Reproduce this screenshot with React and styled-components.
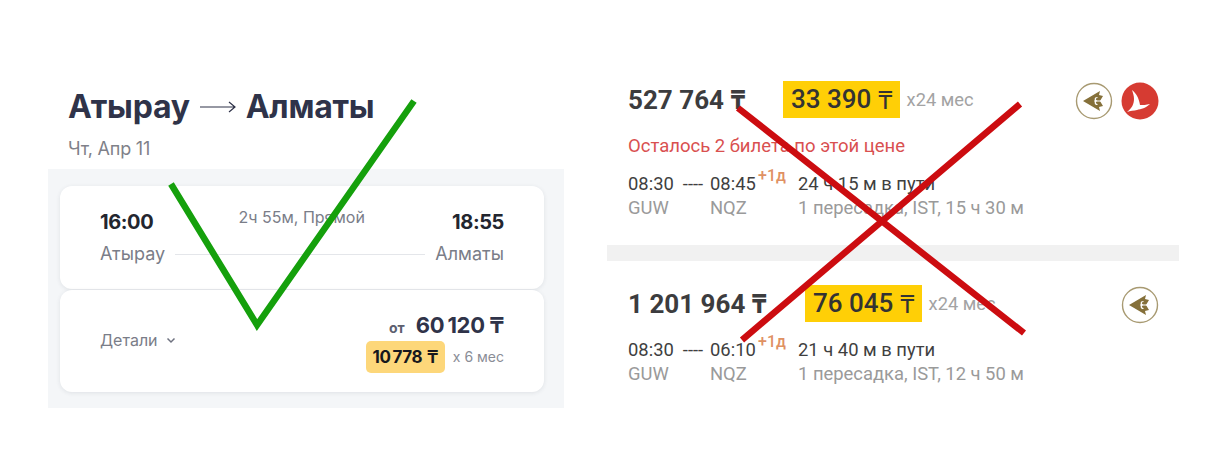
import React from 'react';
import styled, { createGlobalStyle } from 'styled-components';

const GlobalStyle = createGlobalStyle`
    html, body {
        margin: 0;
        padding: 0;
        background: #fff;
    }
`;

const Page = styled.div`
    position: relative;
    display: flex;
    width: 1214px;
    height: 454px;
    overflow: hidden;
    background: #fff;
`;

const LeftPanel = styled.section`
    width: 516px;
    margin-left: 48px;
    font-family: Inter, "Noto Sans", sans-serif;
`;

const RouteHeader = styled.header`
    height: 169px;
    padding: 88px 0 0 20px;
    box-sizing: border-box;
`;

const RouteTitle = styled.h1`
    display: flex;
    align-items: center;
    gap: 10px;
    margin: 0;
    height: 37px;
    font-size: 32px;
    line-height: 37px;
    font-weight: 700;
    letter-spacing: -0.25px;
    color: #2f3349;
`;

const RouteDate = styled.div`
    margin-top: 13px;
    font-size: 18px;
    line-height: 22px;
    color: #7f8189;
    letter-spacing: -0.2px;
`;

const Cards = styled.div`
    display: flex;
    flex-direction: column;
    gap: 1px;
    height: 239px;
    padding: 17px 20px 0 12px;
    box-sizing: border-box;
    background: #f4f6f8;
`;

const Card = styled.div`
    height: ${p => p.$height}px;
    padding: ${p => p.$padding};
    box-sizing: border-box;
    border-radius: 12px;
    background: #fff;
    box-shadow: 0 1px 4px rgba(40, 50, 70, 0.1);
`;

const TimeRow = styled.div`
    display: flex;
    justify-content: space-between;
    align-items: flex-start;
    height: 32px;
`;

const TimeText = styled.div`
    font-size: 20px;
    line-height: 24px;
    font-weight: 700;
    letter-spacing: -0.4px;
    color: #23262f;
`;

const Duration = styled.div`
    font-size: 16px;
    line-height: 18px;
    color: #7a7d88;
    margin: -2px 0 0 -2px;
`;

const CityRow = styled.div`
    display: flex;
    align-items: center;
    gap: 10px;
    font-size: 18px;
    line-height: 24px;
    color: #7a7d88;
`;

const CityLine = styled.div`
    flex: 1;
    height: 1px;
    background: #e4e6ea;
`;

const PriceCard = styled.div`
    display: flex;
    justify-content: space-between;
    align-items: center;
    height: 100%;
`;

const Details = styled.div`
    display: flex;
    align-items: center;
    gap: 8px;
    font-size: 16px;
    color: #7a7d88;
    margin-top: -2px;
`;

const PriceColumn = styled.div`
    display: flex;
    flex-direction: column;
    align-items: flex-end;
    gap: 2px;
    margin-top: 1px;
`;

const PriceLine = styled.div`
    display: flex;
    align-items: baseline;
    gap: 11px;
    font-weight: 700;
    color: #2f3349;
`;

const FromLabel = styled.span`
    font-size: 14px;
    color: #5d6070;
`;

const MainPrice = styled.span`
    font-size: 22px;
    line-height: 28px;
    letter-spacing: -0.3px;
`;

const InstallmentLine = styled.div`
    display: flex;
    align-items: center;
    gap: 8px;
    font-size: 14px;
    color: #8a8d96;
`;

const InstallmentBadge = styled.span`
    display: inline-flex;
    align-items: center;
    gap: 5px;
    height: 32px;
    padding: 0 7px;
    border-radius: 5px;
    background: #fdd77a;
    font-size: 17px;
    font-weight: 700;
    letter-spacing: -0.5px;
    color: #17181d;
`;

const Tenge = styled.span`
    font-weight: ${p => p.$weight || 700};
`;

const RightPanel = styled.section`
    width: 572px;
    margin-left: 43px;
    font-family: Roboto, "Noto Sans", sans-serif;
`;

const Offer = styled.div`
    height: ${p => p.$height}px;
    padding: ${p => p.$top}px 20px 0 21px;
    box-sizing: border-box;
`;

const OfferTop = styled.div`
    display: flex;
    align-items: center;
    height: 38px;
`;

const OfferPrice = styled.div`
    font-size: 26px;
    font-weight: 700;
    color: #3c3c3e;
    min-width: ${p => p.$width}px;
`;

const PromoPrice = styled.div`
    display: flex;
    align-items: center;
    gap: 7px;
    height: 37px;
    padding: 0 7px 0 8px;
    background: #ffcf06;
    font-size: 26px;
    font-weight: 500;
    color: #333;
`;

const Months = styled.span`
    margin-left: 7px;
    font-size: 18.3px;
    color: #a3a3a3;
`;

const Logos = styled.div`
    display: flex;
    gap: 8px;
    margin: 4px 0 0 auto;
`;

const Warning = styled.div`
    margin-top: 17px;
    font-size: 18.5px;
    line-height: 22px;
    color: #d95050;
`;

const Itinerary = styled.div`
    display: grid;
    grid-template-columns: 82px 88px auto;
    margin-top: ${p => p.$top}px;
    font-size: 18.4px;
    line-height: 24px;
    color: #3f3f3f;
`;

const Muted = styled.div`
    color: #9a9a9a;
`;

const DepartTime = styled.div`
    display: flex;
    gap: 9px;
    white-space: nowrap;
`;

const Arrival = styled.div`
    position: relative;
`;

const NextDay = styled.sup`
    position: absolute;
    left: 48px;
    top: -5px;
    font-size: 16px;
    line-height: 18px;
    font-weight: 500;
    color: #df9163;
`;

const Separator = styled.div`
    height: 16px;
    background: #f1f1f1;
`;

const Overlay = styled.svg`
    position: absolute;
    inset: 0;
    pointer-events: none;
`;

function EmblemLogo() {
    return (
        <svg width="38" height="38" viewBox="0 0 38 38">
            <circle cx="19" cy="19" r="17.5" fill="#fff" stroke="#a89a72" strokeWidth="1.4" />
            <path d="M8 19 L25 9 L24 13 L28 14 L25 19 L28 24 L24 25 L25 29 Z" fill="#85703a" />
            <path d="M19 19h7M22.5 15.5c-3 0-3 3.5 0 3.5M22.5 22.5c-3 0-3-3.5 0-3.5" fill="none" stroke="#fff" strokeWidth="1.2" />
        </svg>
    );
}

function TurkishLogo() {
    return (
        <svg width="38" height="38" viewBox="0 0 38 38">
            <circle cx="19" cy="19" r="18.5" fill="#d63b32" />
            <path d="M11 8 C15 11 18 16 19 23 C22 23 25 23 29 22 C25 26 20 27 16 28 C13 28.5 9 29 6 30 C11 26 13 22 13 17 C13 14 12 11 11 8 Z" fill="#fff" />
        </svg>
    );
}

function Chevron() {
    return (
        <svg width="10" height="7" viewBox="0 0 10 7">
            <path d="M1.5 1.5 L5 5 L8.5 1.5" fill="none" stroke="#6f7280" strokeWidth="1.5" />
        </svg>
    );
}

function LongArrow() {
    return (
        <svg width="36" height="14" viewBox="0 0 36 14">
            <path d="M0 7 H35 M29 2 L35 7 L29 12" fill="none" stroke="#2f3349" strokeWidth="1.2" />
        </svg>
    );
}

function OfferRow({ depart, arrive, from, to, duration, stops, top }) {
    return (
        <Itinerary $top={top}>
            <DepartTime>{depart} <span>----</span></DepartTime>
            <Arrival>{arrive}<NextDay>+1д</NextDay></Arrival>
            <div>{duration}</div>
            <Muted>{from}</Muted>
            <Muted>{to}</Muted>
            <Muted>{stops}</Muted>
        </Itinerary>
    );
}

export default function App() {
    return (
        <Page>
            <GlobalStyle />
            <LeftPanel>
                <RouteHeader>
                    <RouteTitle>Атырау <LongArrow /> Алматы</RouteTitle>
                    <RouteDate>Чт, Апр 11</RouteDate>
                </RouteHeader>
                <Cards>
                    <Card $height={103} $padding="24px 40px 0">
                        <TimeRow>
                            <TimeText>16:00</TimeText>
                            <Duration>2ч 55м, Прямой</Duration>
                            <TimeText>18:55</TimeText>
                        </TimeRow>
                        <CityRow>
                            <span>Атырау</span>
                            <CityLine />
                            <span>Алматы</span>
                        </CityRow>
                    </Card>
                    <Card $height={102} $padding="0 40px">
                        <PriceCard>
                            <Details>Детали <Chevron /></Details>
                            <PriceColumn>
                                <PriceLine>
                                    <FromLabel>от</FromLabel>
                                    <MainPrice>60&#8201;120 <Tenge>₸</Tenge></MainPrice>
                                </PriceLine>
                                <InstallmentLine>
                                    <InstallmentBadge>10&#8201;778 <Tenge>₸</Tenge></InstallmentBadge>
                                    <span>x 6 мес</span>
                                </InstallmentLine>
                            </PriceColumn>
                        </PriceCard>
                    </Card>
                </Cards>
            </LeftPanel>
            <RightPanel>
                <Offer $height={245} $top={80}>
                    <OfferTop>
                        <OfferPrice $width={155}>527 764 <Tenge>₸</Tenge></OfferPrice>
                        <PromoPrice>33 390 <Tenge $weight={400}>₸</Tenge></PromoPrice>
                        <Months>x24 мес</Months>
                        <Logos>
                            <EmblemLogo />
                            <TurkishLogo />
                        </Logos>
                    </OfferTop>
                    <Warning>Осталось 2 билета по этой цене</Warning>
                    <OfferRow top={15} depart="08:30" arrive="08:45" from="GUW" to="NQZ" duration="24 ч 15 м в пути" stops="1 пересадка, IST, 15 ч 30 м" />
                </Offer>
                <Separator />
                <Offer $height={150} $top={23}>
                    <OfferTop>
                        <OfferPrice $width={177}>1 201 964 <Tenge>₸</Tenge></OfferPrice>
                        <PromoPrice>76 045 <Tenge $weight={400}>₸</Tenge></PromoPrice>
                        <Months>x24 мес</Months>
                        <Logos>
                            <EmblemLogo />
                        </Logos>
                    </OfferTop>
                    <OfferRow top={16} depart="08:30" arrive="06:10" from="GUW" to="NQZ" duration="21 ч 40 м в пути" stops="1 пересадка, IST, 12 ч 50 м" />
                </Offer>
            </RightPanel>
            <Overlay width="1214" height="454" viewBox="0 0 1214 454">
                <path d="M171 184 L257 325 L414 101" fill="none" stroke="#15a00c" strokeWidth="6.5" />
                <path d="M738 108 L1024 333 M1020 104 L742 340" fill="none" stroke="#cc0c10" strokeWidth="6.5" />
            </Overlay>
        </Page>
    );
}
